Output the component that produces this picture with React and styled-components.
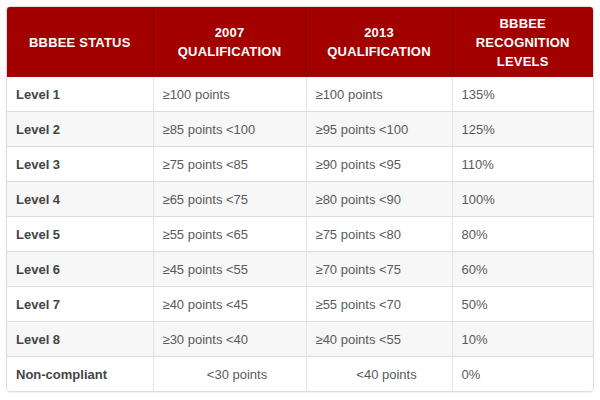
import React from "react";
import styled, { createGlobalStyle } from "styled-components";

const GlobalStyle = createGlobalStyle`
  html, body {
    margin: 0;
    padding: 0;
    background: #fff;
  }
  body {
    font-family: "Liberation Sans", Arial, sans-serif;
  }
`;

const Wrapper = styled.div`
  width: 600px;
  height: 400px;
  padding: 6px 6px 0 6px;
  box-sizing: border-box;
`;

const Card = styled.div`
  width: 588px;
  border: 1px solid #dcdcdc;
  border-radius: 4px;
  overflow: hidden;
  box-sizing: border-box;
  box-shadow: 0 1px 2px rgba(0, 0, 0, 0.06);
`;

const Table = styled.table`
  width: 100%;
  border-collapse: collapse;
  table-layout: fixed;
  font-size: 13px;
`;

const HeadCell = styled.th`
  background: #a30000;
  color: #fff;
  font-weight: bold;
  text-transform: uppercase;
  text-align: center;
  line-height: 19px;
  height: 70px;
  padding: 0 10px;
  letter-spacing: 0.2px;
  border-left: 1px solid #8d0000;
  &:first-child {
    border-left: none;
  }
`;

const Row = styled.tr`
  background: ${(p) => (p.$striped ? "#f7f7f7" : "#fff")};
  border-top: 1px solid #dddddd;
  &:first-child {
    border-top: none;
  }
`;

const Cell = styled.td`
  height: 34px;
  padding: 0 0 0 ${(p) => (p.$center ? "15px" : "9px")};
  text-align: ${(p) => (p.$center ? "center" : "left")};
  color: ${(p) => (p.$label ? "#444" : "#5a5a5a")};
  font-weight: ${(p) => (p.$label ? "bold" : "normal")};
  border-left: 1px solid #e4e4e4;
  &:first-child {
    border-left: none;
  }
`;

const rows = [
  ["Level 1", "≥100 points", "≥100 points", "135%"],
  ["Level 2", "≥85 points <100", "≥95 points <100", "125%"],
  ["Level 3", "≥75 points <85", "≥90 points <95", "110%"],
  ["Level 4", "≥65 points <75", "≥80 points <90", "100%"],
  ["Level 5", "≥55 points <65", "≥75 points <80", "80%"],
  ["Level 6", "≥45 points <55", "≥70 points <75", "60%"],
  ["Level 7", "≥40 points <45", "≥55 points <70", "50%"],
  ["Level 8", "≥30 points <40", "≥40 points <55", "10%"],
];

export default function App() {
  return (
    <Wrapper>
      <GlobalStyle />
      <Card>
        <Table>
          <colgroup>
            <col style={{ width: 146 }} />
            <col style={{ width: 153 }} />
            <col style={{ width: 146 }} />
            <col />
          </colgroup>
          <thead>
            <tr>
              <HeadCell>BBBEE Status</HeadCell>
              <HeadCell>
                2007
                <br />
                Qualification
              </HeadCell>
              <HeadCell>
                2013
                <br />
                Qualification
              </HeadCell>
              <HeadCell>
                BBBEE
                <br />
                Recognition
                <br />
                Levels
              </HeadCell>
            </tr>
          </thead>
          <tbody>
            {rows.map((r, i) => (
              <Row key={r[0]} $striped={i % 2 === 1}>
                <Cell $label>{r[0]}</Cell>
                <Cell>{r[1]}</Cell>
                <Cell>{r[2]}</Cell>
                <Cell>{r[3]}</Cell>
              </Row>
            ))}
            <Row>
              <Cell $label>Non-compliant</Cell>
              <Cell $center>&lt;30 points</Cell>
              <Cell $center>&lt;40 points</Cell>
              <Cell>0%</Cell>
            </Row>
          </tbody>
        </Table>
      </Card>
    </Wrapper>
  );
}
